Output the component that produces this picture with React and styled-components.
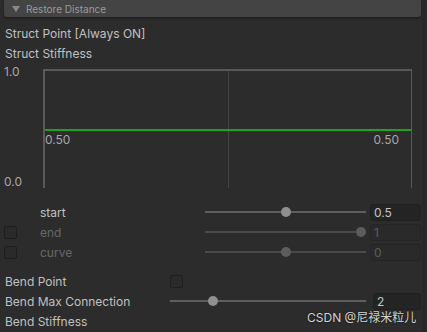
import React from "react";
import styled, { createGlobalStyle } from "styled-components";

const Global = createGlobalStyle`
  html, body { margin: 0; padding: 0; background: #2b2b2b; }
  body { width: 427px; height: 332px; overflow: hidden; font-family: Inter, "Noto Sans", "Noto Sans CJK SC", sans-serif; }
  * { box-sizing: border-box; }
`;

const Page = styled.div`
  position: relative;
  width: 427px;
  height: 332px;
  background: #2c2c2c;
  display: flex;
`;

const Main = styled.div`
  width: 422px;
  display: flex;
  flex-direction: column;
`;

const Gutter = styled.div`
  width: 5px;
  background: #282828;
`;

const Header = styled.div`
  margin: 0 1px 0 4px;
  height: 17px;
  flex-shrink: 0;
  background: #444444;
  border-radius: 0 0 3px 3px;
  box-shadow: 0 1px 2px rgba(0, 0, 0, 0.45);
  display: flex;
  align-items: center;
  gap: 6px;
  padding-left: 8px;
  font-size: 10px;
  color: #9a9a9a;
`;

const Tri = styled.span`
  width: 0;
  height: 0;
  border-left: 4px solid transparent;
  border-right: 4px solid transparent;
  border-top: 6px solid #8a8a8a;
`;

const Label = styled.div`
  height: 20px;
  line-height: 20px;
  padding-left: 5px;
  font-size: 12px;
  color: #c0c0c0;
  white-space: nowrap;
`;

const GraphRow = styled.div`
  display: flex;
  height: 124px;
  margin-top: 1px;
  flex-shrink: 0;
`;

const Axis = styled.div`
  width: 43px;
  display: flex;
  flex-direction: column;
  justify-content: space-between;
  padding-left: 4px;
  font-size: 12px;
  color: #a8a8a8;
  line-height: 14px;
`;

const Graph = styled.div`
  position: relative;
  width: 369px;
  height: 119px;
  margin-top: 4px;
  border: 2px solid #595959;
  border-right-width: 1px;
  border-bottom: none;
`;

const MidLine = styled.div`
  position: absolute;
  left: 183px;
  top: 0;
  bottom: 0;
  width: 1px;
  background: #444;
`;

const Curve = styled.div`
  position: absolute;
  left: 0;
  right: 0;
  top: 58px;
  height: 2px;
  background: #1fa31f;
`;

const CurveLabel = styled.span`
  position: absolute;
  top: 61px;
  ${(p) => (p.$right ? "right: 12px;" : "left: 0;")}
  font-size: 12px;
  color: #a8a8a8;
`;

const Rows = styled.div`
  margin-top: ${(p) => p.$top}px;
  display: flex;
  flex-direction: column;
`;

const Row = styled.div`
  display: flex;
  align-items: center;
  height: 20px;
`;

const Check = styled.div`
  width: 13px;
  height: 13px;
  flex-shrink: 0;
  border: 1px solid #1e1e1e;
  background: #2a2a2a;
  border-radius: 2px;
  margin-left: ${(p) => p.$left ?? 4}px;
  visibility: ${(p) => (p.$hidden ? "hidden" : "visible")};
`;

const RowLabel = styled.div`
  width: ${(p) => p.$w}px;
  flex-shrink: 0;
  padding-left: ${(p) => p.$pad || 0}px;
  font-size: 12px;
  color: ${(p) => (p.$dim ? "#686868" : "#c0c0c0")};
  white-space: nowrap;
`;

const Slider = styled.div`
  position: relative;
  width: ${(p) => p.$w}px;
  flex-shrink: 0;
  height: 12px;
  margin-right: 4px;
`;

const Track = styled.div`
  position: absolute;
  left: 0;
  right: 0;
  top: 5px;
  height: 2px;
  background: ${(p) => (p.$dim ? "#4a4a4a" : "#5e5e5e")};
`;

const Thumb = styled.div`
  position: absolute;
  top: 1px;
  width: 10px;
  height: 10px;
  margin-left: -5px;
  border-radius: 50%;
  background: ${(p) => (p.$dim ? "#5c5c5c" : "#8f8f8f")};
`;

const Field = styled.div`
  width: ${(p) => p.$w || 51}px;
  flex-shrink: 0;
  height: 17px;
  margin-left: ${(p) => p.$ml || 0}px;
  border: 1px solid ${(p) => (p.$dim ? "#252525" : "#202020")};
  border-radius: 3px;
  background: ${(p) => (p.$dim ? "#2a2a2a" : "#242424")};
  color: ${(p) => (p.$dim ? "#5a5a5a" : "#c4c4c4")};
  font-size: 12px;
  line-height: 15px;
  padding-left: 3px;
`;

const Watermark = styled.div`
  position: absolute;
  left: 307px;
  top: 308px;
  font-size: 12px;
  color: #d2d2d2;
  font-family: Inter, "Noto Sans CJK SC", sans-serif;
  text-shadow: 0 0 2px rgba(0, 0, 0, 0.6);
`;

const curveRows = [
  { label: "start", value: "0.5", pos: 0.5, dim: false, check: false },
  { label: "end", value: "1", pos: 0.97, dim: true, check: true },
  { label: "curve", value: "0", pos: 0.5, dim: true, check: true },
];

export default function App() {
  return (
    <Page>
      <Global />
      <Main>
        <Header>
          <Tri />
          Restore Distance
        </Header>
        <Label style={{ marginTop: 7 }}>Struct Point [Always ON]</Label>
        <Label>Struct Stiffness</Label>
        <GraphRow>
          <Axis>
            <span>1.0</span>
            <span>0.0</span>
          </Axis>
          <Graph>
            <MidLine />
            <Curve />
            <CurveLabel>0.50</CurveLabel>
            <CurveLabel $right>0.50</CurveLabel>
          </Graph>
        </GraphRow>
        <Rows $top={13}>
          {curveRows.map((r) => (
            <Row key={r.label}>
              <Check $hidden={!r.check} />
              <RowLabel $w={188} $pad={23} $dim={r.dim}>
                {r.label}
              </RowLabel>
              <Slider $w={161}>
                <Track $dim={r.dim} />
                <Thumb $dim={r.dim} style={{ left: `${r.pos * 100}%` }} />
              </Slider>
              <Field $dim={r.dim}>{r.value}</Field>
            </Row>
          ))}
        </Rows>
        <Rows $top={9}>
          <Row>
            <RowLabel $w={170} $pad={5}>Bend Point</RowLabel>
            <Check $left={0} />
          </Row>
          <Row>
            <RowLabel $w={170} $pad={5}>Bend Max Connection</RowLabel>
            <Slider $w={196}>
              <Track />
              <Thumb style={{ left: "22%" }} />
            </Slider>
            <Field $w={48} $ml={3}>2</Field>
          </Row>
          <Row>
            <RowLabel $w={170} $pad={5}>Bend Stiffness</RowLabel>
          </Row>
        </Rows>
      </Main>
      <Gutter />
      <Watermark>CSDN @尼禄米粒儿</Watermark>
    </Page>
  );
}
